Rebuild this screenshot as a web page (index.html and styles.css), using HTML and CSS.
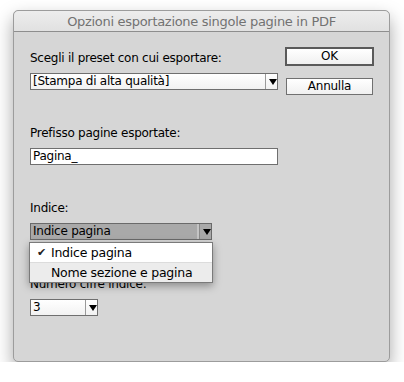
FILE: index.html
```html
<!DOCTYPE html>
<html lang="it">
<head>
  <meta charset="UTF-8">
  <title>Opzioni esportazione singole pagine in PDF</title>
  <link rel="stylesheet" href="styles.css">
</head>
<body>
<div class="dialog">
  <div class="titlebar">Opzioni esportazione singole pagine in PDF</div>
  <div class="content">
    <div class="fields">
      <div class="field">
        <div class="label">Scegli il preset con cui esportare:</div>
        <div class="select wide"><span class="value">[Stampa di alta qualità]</span><span class="arrow"></span></div>
      </div>
      <div class="field">
        <div class="label">Prefisso pagine esportate:</div>
        <div class="textbox">Pagina_</div>
      </div>
      <div class="field index">
        <div class="label">Indice:</div>
        <div class="select open"><span class="value">Indice pagina</span><span class="arrow"></span></div>
        <div class="menu">
          <div class="item checked"><span class="check">✔</span>Indice pagina</div>
          <div class="item">Nome sezione e pagina</div>
        </div>
      </div>
      <div class="field">
        <div class="label">Numero cifre indice:</div>
        <div class="select small"><span class="value">3</span><span class="arrow"></span></div>
      </div>
    </div>
    <div class="buttons">
      <div class="button default">OK</div>
      <div class="button">Annulla</div>
    </div>
  </div>
</div>
</body>
</html>
```

FILE: styles.css
```css
body { margin: 0; background: #ffffff; font-family: "DejaVu Sans", sans-serif; font-size: 12px; letter-spacing: -0.25px; color: #000; }
.dialog { margin: 10px 0 0 13px; width: 375px; height: 350px; background: #d6d6d6; border: 1px solid #9c9c9c; border-radius: 5px; box-shadow: 0 8px 18px rgba(0,0,0,0.35); }
.titlebar { height: 20px; line-height: 21px; text-align: center; font-size: 13px; letter-spacing: -0.3px; color: #727272; background: linear-gradient(#ededed, #e1e1e1); border-bottom: 1px solid #8e8e8e; border-radius: 5px 5px 0 0; }
.content { display: flex; gap: 7px; padding: 18px 0 0 16px; }
.fields { width: 248px; display: flex; flex-direction: column; }
.field { display: flex; flex-direction: column; gap: 7px; margin-bottom: 35px; position: relative; }
.label { line-height: 16px; height: 16px; }
.select, .textbox { height: 15px; line-height: 15px; border: 1px solid #6f6f6f; background: linear-gradient(#ffffff, #f2f2f2); display: flex; align-items: center; padding-left: 2px; }
.select .value { flex: 1; white-space: nowrap; }
.select .arrow { width: 11px; height: 15px; border-left: 1px solid #9a9a9a; position: relative; }
.select .arrow::after { content: ""; position: absolute; left: 3px; top: 5px; border-left: 4px solid transparent; border-right: 4px solid transparent; border-top: 6px solid #000; }
.wide { width: 244px; }
.textbox { width: 244px; background: #fff; }
.open { width: 178px; background: #a9a9a9; border-color: #6a6a6a; }
.open .arrow { border-left: 1px solid #8a8a8a; box-shadow: -2px 0 0 #c4c4c4; }
.small { width: 64px; }
.index { margin-bottom: 36px; }
.menu { position: absolute; left: -1px; top: 42px; width: 182px; background: #fff; border: 1px solid #7a7a7a; box-shadow: 0 3px 8px rgba(0,0,0,0.35); z-index: 5; }
.item { height: 19px; line-height: 19px; padding-left: 21px; position: relative; font-size: 12.5px; }
.item + .item { background: #ececec; border-top: 1px solid #dcdcdc; }
.check { position: absolute; left: 7px; font-size: 11px; color: #222; }
.buttons { display: flex; flex-direction: column; gap: 12px; margin-top: -3px; }
.button { width: 85px; height: 15px; line-height: 15px; text-align: center; border: 1px solid #707070; background: linear-gradient(#ffffff, #f0f0f0); margin-left: 1px; }
.button.default { height: 15px; border: 2px solid #5a5a5a; margin-left: 0; }
```
